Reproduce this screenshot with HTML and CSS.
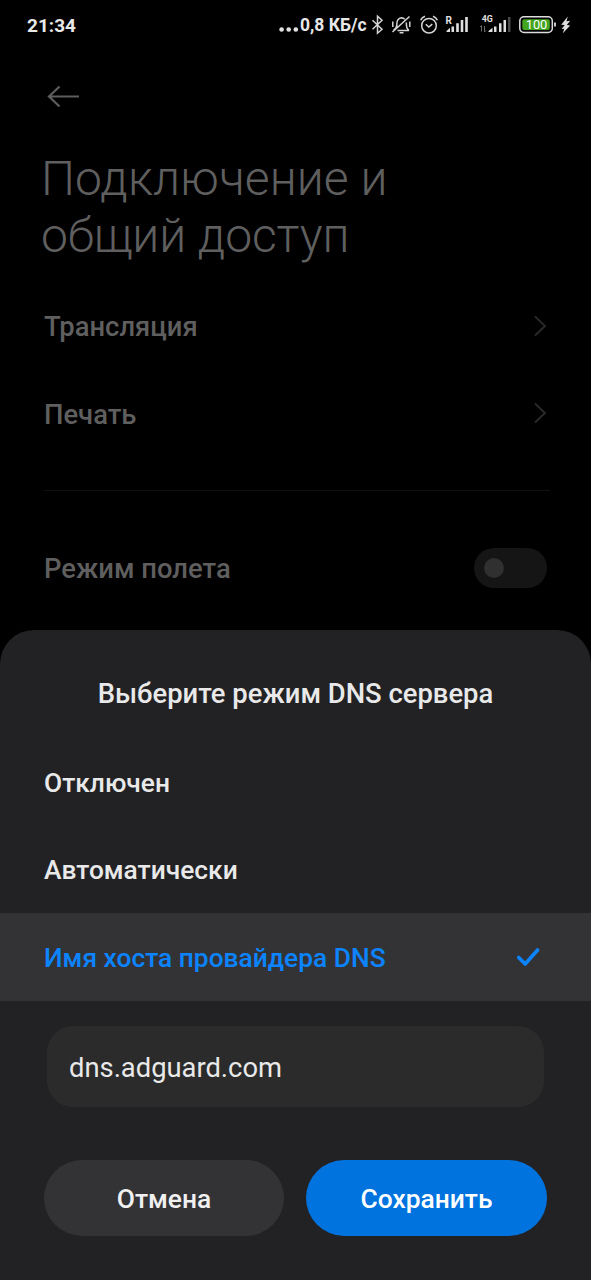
FILE: index.html
```html
<!DOCTYPE html>
<html lang="ru">
<head>
<meta charset="utf-8">
<title>Подключение и общий доступ</title>
<link rel="stylesheet" href="styles.css">
</head>
<body>
<div class="screen">
  <header class="status">
    <span class="clock">21:34</span>
    <div class="indicators">
      <svg class="dots" width="21" height="30" viewBox="278 10 21 30"><g fill="#e2e2e2"><circle cx="281.6" cy="29.5" r="2.3"/><circle cx="288.7" cy="29.5" r="2.3"/><circle cx="295.8" cy="29.5" r="2.3"/></g></svg>
      <span class="speed">0,8 КБ/с</span>
      <svg class="icons" width="208" height="30" viewBox="368 10 208 30" fill="none" stroke="#d4d4d4" stroke-width="1.5">
        <path d="M372.5 20.2 L382 29.3 L377.5 33.2 V16.2 L382 20.2 L372.5 29.3"/>
        <path d="M397.500 30.500 H409 M396.800 27 V24 C396.800 20.500 398.500 18.300 401.500 17.800 C403 18 404 18.500 404.800 19.200 M406.300 22.500 C406.500 27 406.500 28.500 409 30.500 M399.600 32.800 H403.500 M392.500 32 L409.500 16.500 M392.800 21.500 V27 M409.800 21.500 V27 M393.500 30 Q396.500 28.500 396.800 25"/>
        <circle cx="429" cy="25.700" r="7.300"/>
        <path d="M425.800 24.200 L428.800 27 L432.300 24.200 M420.600 20.300 Q421.800 17.300 425 16.200 M437.400 20.300 Q436.200 17.300 433 16.200"/>
        <g fill="#e0e0e0" stroke="none">
          <path d="M446.500 32 V31 L450 27.700 V32 Z M451.500 26.500 H454 V32 H451.500 Z M456.200 23.300 H458.800 V32 H456.200 Z M460.700 20 H463.300 V32 H460.700 Z M465.200 17 H467.800 V32 H465.200 Z"/>
          <path d="M488.500 32 V31 L492.500 27.700 V32 Z M494 26.500 H496.500 V32 H494 Z M499 23.300 H501.500 V32 H499 Z M503.500 20 H506 V32 H503.500 Z"/>
          <path fill="#4a4a4a" d="M508 17 H510.500 V32 H508 Z"/>
          <text class="network" x="445.500" y="24" font-size="10">R</text>
          <text class="network" x="481.700" y="22.300" font-size="8.800">4G</text>
        </g>
        <path stroke="#666" stroke-width="1" d="M481.500 31.500 V25.500 M480 27 L481.500 25.500 M484.500 26 V32 M486 30.500 L484.500 32"/>
        <rect x="519.800" y="16.800" width="32.500" height="15.600" rx="4.200" stroke="#ddd"/>
        <rect x="522.300" y="19.200" width="27.500" height="10.800" rx="2" fill="#43a51e" stroke="none"/>
        <path d="M555 22.500 V26.500" stroke="#ddd" stroke-width="1.800"/>
        <text class="charge" x="536.500" y="29.300" text-anchor="middle">100</text>
        <path fill="#ddd" stroke="none" d="M567.800 16.500 L561.200 24.800 L564.800 25 L561.500 29 L564.200 28.700 L562.800 33.300 L570.200 25.500 L566.800 25 L570.200 20.800 L566.500 21.200 Z"/>
      </svg>
    </div>
  </header>

  <main class="settings">
    <svg class="back" width="34" height="26" viewBox="46 84 34 26" fill="none" stroke="#5d5d5d" stroke-width="2.200"><path d="M79 96.500 H49.500 M59.500 86.500 L49 96.500 L59.500 106.500"/></svg>
    <h1 class="heading"><span class="heading-first">Подключение и</span><br><span class="heading-second">общий доступ</span></h1>
    <div class="row"><span class="label">Трансляция</span><svg class="chevron" width="14" height="24" viewBox="0 0 14 24"><path d="M2 2.500 L12 12 L2 21.500"/></svg></div>
    <div class="row"><span class="label">Печать</span><svg class="chevron" width="14" height="24" viewBox="0 0 14 24"><path d="M2 2.500 L12 12 L2 21.500"/></svg></div>
    <hr class="divider">
    <div class="row"><span class="label">Режим полета</span><span class="switch"><span class="knob"></span></span></div>
  </main>

  <section class="sheet">
    <h2 class="title">Выберите режим DNS сервера</h2>
    <div class="option"><span class="option-label">Отключен</span></div>
    <div class="option"><span class="option-label">Автоматически</span></div>
    <div class="option selected"><span class="option-label">Имя хоста провайдера DNS</span>
      <svg width="26" height="24" viewBox="515 945 26 24" fill="none" stroke="#0d84ff" stroke-width="3.600" stroke-linecap="round" stroke-linejoin="round"><path d="M518.700 957.500 L525.200 964 L537.600 950"/></svg>
    </div>
    <div class="field">dns.adguard.com</div>
    <div class="actions">
      <button class="button cancel">Отмена</button>
      <button class="button save">Сохранить</button>
    </div>
  </section>
</div>
</body>
</html>
```
FILE: styles.css
```css
* { box-sizing: border-box; }
body { margin: 0; background: #000; font-family: Roboto, "Noto Sans", sans-serif; }
.screen { width: 591px; height: 1280px; display: flex; flex-direction: column; overflow: hidden; }
.status { height: 50px; flex: none; padding: 10px 15px 10px 27px; display: flex; justify-content: space-between; align-items: center; color: #e8e8e8; }
.clock { font-size: 19px; font-weight: 700; line-height: 30px; padding-top: 2px; }
.indicators { display: flex; align-items: center; }
.indicators svg { display: block; flex: none; }
.speed { width: 69px; padding-left: 1px; white-space: nowrap; font-size: 17.500px; font-weight: 700; line-height: 30px; }
.network { font-family: Roboto, sans-serif; font-weight: 700; }
.charge { font-family: Roboto, sans-serif; font-size: 12.800px; font-weight: 400; fill: #fff; stroke: none; }
.settings { height: 580px; flex: none; padding: 34px 44px 0; color: #5f5f5f; }
.back { display: block; margin-left: 2px; }
.heading { margin: 40px 0 0 -3px; font-size: 48px; line-height: 57px; font-weight: 300; white-space: nowrap; }
.heading-first { letter-spacing: 0.080px; }
.heading-second { letter-spacing: -0.080px; }
.row { height: 87.500px; display: flex; justify-content: space-between; align-items: center; font-size: 27.400px; font-weight: 500; }
.label { padding-top: 3px; }
.heading + .row { margin-top: 18px; }
.chevron { fill: none; stroke: #2b2b2b; stroke-width: 1.800; }
.divider { height: 1px; border: 0; margin: 33px -3px 33px 0; background: #101010; }
.switch { width: 73px; height: 40px; border-radius: 20px; background: #151515; padding: 10px; }
.knob { display: block; width: 20px; height: 20px; border-radius: 50%; background: #303030; }
.sheet { flex: 1; background: #222224; border-radius: 34px 34px 0 0; color: #e9e9ea; }
.title { margin: 0; height: 108px; padding-top: 20px; display: flex; align-items: center; justify-content: center; font-size: 27.400px; font-weight: 500; }
.option { height: 87.500px; padding: 0 50px 0 44px; display: flex; align-items: center; justify-content: space-between; font-size: 26.350px; font-weight: 500; }
.option-label { padding-top: 1.500px; }
.selected { background: #333335; color: #0d84ff; }
.field { height: 81px; margin: 25.500px 47px 0; padding: 2px 23px 0 22px; border-radius: 26px; background: #2b2b2b; display: flex; align-items: center; font-size: 27.350px; }
.actions { display: grid; grid-template-columns: 240px 241px; gap: 22px; padding: 53px 44px 0; }
.button { height: 76px; border: 0; border-radius: 38px; padding: 2px 0 0; font: 500 26.400px Roboto, "Noto Sans", sans-serif; color: #f0f0f1; }
.cancel { background: #333335; }
.save { background: #0073df; color: #fff; }
```
